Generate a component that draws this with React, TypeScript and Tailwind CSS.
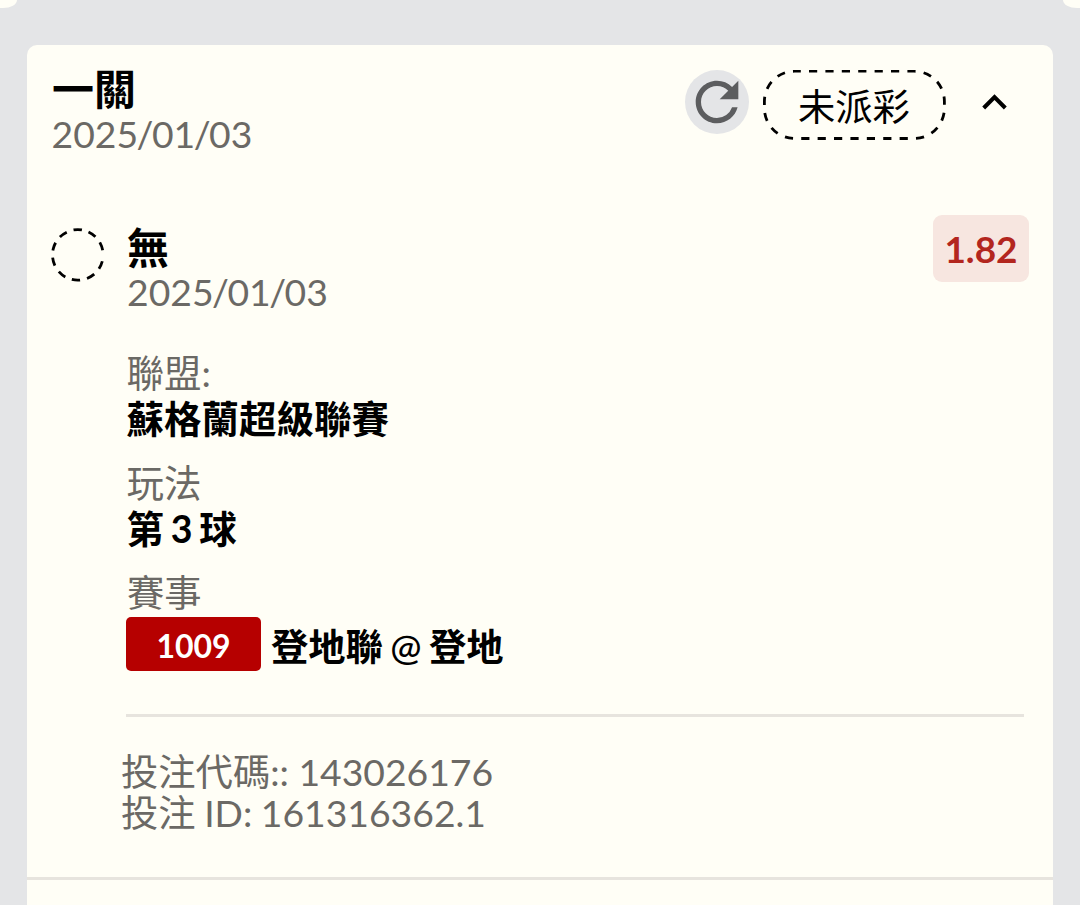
import React, { useState } from 'react';
import { MdExpandLess, MdExpandMore, MdRefresh } from 'react-icons/md';

interface Leg {
  title: string;
  date: string;
  odds: string;
  league: string;
  market: string;
  code: string;
  home: string;
  away: string;
}

const leg: Leg = {
  title: '無',
  date: '2025/01/03',
  odds: '1.82',
  league: '蘇格蘭超級聯賽',
  market: '第 3 球',
  code: '1009',
  home: '登地聯',
  away: '登地',
};

// ten dashes, with a slightly wider gap on the right where the ring starts
const RING_DASHES = [...Array(9).fill('8.3 7.1'), '8.3 100'].join(' ');

const StatusRing: React.FC = () => (
  <svg width="54" height="54" viewBox="0 0 54 54" className="block">
    <circle
      cx="26.8"
      cy="26.9"
      r="25.3"
      fill="none"
      stroke="#000"
      strokeWidth="2.8"
      strokeDasharray={RING_DASHES}
      transform="rotate(14.5 26.8 26.9)"
    />
  </svg>
);

const StatusPill: React.FC<{ label: string }> = ({ label }) => (
  <div className="relative w-[183px] h-[70px]">
    <svg width="183" height="70" viewBox="0 0 183 70" className="absolute inset-0">
      <rect
        x="1.4"
        y="1.2"
        width="180"
        height="67.3"
        rx="30.2"
        fill="none"
        stroke="#000"
        strokeWidth="2.8"
        strokeDasharray="8.2 8.2"
        strokeDashoffset="2"
      />
    </svg>
    <div className="pt-[15px] pl-[35px] h-[59px] leading-[44px] text-black whitespace-nowrap">{label}</div>
  </div>
);

// slashes sit tight against the digits
const DateText: React.FC<{ value: string }> = ({ value }) => (
  <>
    {value.split('/').map((part, i) => (
      <React.Fragment key={i}>
        {i > 0 && <span className="-mx-[1.5px]">/</span>}
        {part}
      </React.Fragment>
    ))}
  </>
);

const Field: React.FC<{ label: string; value: string }> = ({ label, value }) => (
  <div className="h-[110px] -ml-[0.5px] text-[37.5px]">
    <div className="h-[46px] leading-[44px] text-[#6b6965]">{label}</div>
    <div className="h-[46px] leading-[44px] font-bold text-black [word-spacing:-2.3px]">{value}</div>
  </div>
);

const App: React.FC = () => {
  const [isOpen, setIsOpen] = useState(true);

  return (
    <div className="w-[1080px] h-[905px] overflow-hidden flex flex-col bg-[#e4e5e7] text-[37.3px] font-['Lato','Noto_Sans_CJK_TC',sans-serif]">
      {/* Bottom edge of the cards above */}
      <div className="h-[45px] shrink-0 flex justify-between items-start">
        <div className="w-[17px] h-[8px] bg-[#fffef6] rounded-br-[14px_8px]" />
        <div className="w-[17px] h-[8px] bg-[#fffef6] rounded-bl-[14px_8px]" />
      </div>

      <div className="mx-[27px] flex-1 bg-[#fffef6] rounded-t-[10px] pt-5">
        <div className="h-[158px] pl-[25px] pr-[34px] flex justify-between items-start">
          <div>
            <h1 className="h-[48px] pt-[2px] leading-[44px] text-[42px] font-bold text-black">一關</h1>
            <p className="h-[42px] -ml-[0.5px] leading-[42px] text-[#6b6965]">
              <DateText value={leg.date} />
            </p>
          </div>
          <div className="flex items-start pt-[5px]">
            <button className="w-16 h-16 rounded-full bg-[#e4e5e7] text-[#5c5d5f]">
              <MdRefresh size={64} />
            </button>
            <div className="ml-[14px]">
              <StatusPill label="未派彩" />
            </div>
            <button className="ml-6 mt-[8px] text-black" onClick={() => setIsOpen(!isOpen)}>
              {isOpen ? <MdExpandLess size={49} /> : <MdExpandMore size={49} />}
            </button>
          </div>
        </div>

        {isOpen && (
          <>
            <div className="h-[491px] pl-[24px] pr-[24px] flex items-start">
              <div className="w-[76px] shrink-0 pt-[5px]">
                <StatusRing />
              </div>
              <div className="flex-1">
                <h2 className="h-[48px] pt-[3px] leading-[44px] text-[42px] font-bold text-black">{leg.title}</h2>
                <p className="h-[80px] leading-[42px] text-[#6b6965]">
                  <DateText value={leg.date} />
                </p>
                <Field label="聯盟:" value={leg.league} />
                <Field label="玩法" value={leg.market} />
                <div className="h-[46px] leading-[44px] text-[#6b6965]">賽事</div>
                <div className="flex items-start">
                  <span className="-ml-px w-[135px] h-[54px] rounded-[5px] bg-[#b60000] text-white text-[32px] leading-[57px] font-bold text-center">
                    {leg.code}
                  </span>
                  <span className="ml-[10px] mt-[8px] leading-[44px] font-bold text-black [word-spacing:-1.7px]">
                    {leg.home} <span className="font-medium">@</span> {leg.away}
                  </span>
                </div>
              </div>
              <span className="-mt-[8px] w-[96px] h-[67px] rounded-[9px] bg-[#f7e6e0] text-[#b3261e] text-[37px] leading-[67px] font-bold text-center">
                {leg.odds}
              </span>
            </div>

            <div className="ml-[99px] mr-[29px] h-[3px] bg-[#e7e4de]" />

            <div className="h-[160px] pt-[35px] pl-[94px] text-[#6b6965]">
              <p className="h-[41px] leading-10">投注代碼:: 143026176</p>
              <p className="h-10 leading-10 [word-spacing:-1px]">投注 ID: 161316362.1</p>
            </div>
            <div className="h-[3px] bg-[#e7e4de]" />
          </>
        )}
      </div>
    </div>
  );
};

export default App;
